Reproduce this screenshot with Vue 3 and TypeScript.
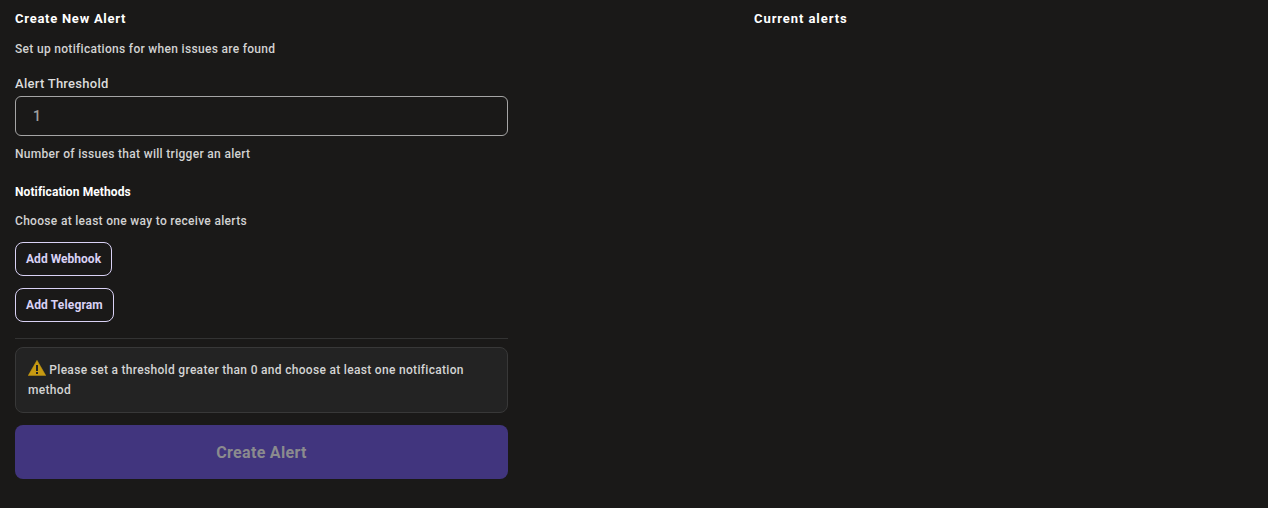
<script setup lang="ts">
const threshold = "1";
</script>

<template>
  <main class="page">
    <section class="left">
      <h2 class="title">Create New Alert</h2>
      <p class="desc first">Set up notifications for when issues are found</p>
      <label class="label">Alert Threshold</label>
      <div class="input">{{ threshold }}</div>
      <p class="desc help">Number of issues that will trigger an alert</p>
      <h3 class="subtitle">Notification Methods</h3>
      <p class="desc choose">Choose at least one way to receive alerts</p>
      <div class="methods">
        <button class="outline">Add Webhook</button>
        <button class="outline telegram">Add Telegram</button>
      </div>
      <hr class="rule" />
      <div class="notice">
        <svg class="warn" viewBox="0 0 18 16" width="18" height="16">
          <path d="M9 0.3 L17.8 15.6 L0.2 15.6 Z" fill="#c79a12" stroke="#c79a12" stroke-width="0.5" stroke-linejoin="round" />
          <rect x="8" y="5" width="2" height="6" fill="#232323" />
          <rect x="8" y="12" width="2" height="2" fill="#232323" />
        </svg>
        Please set a threshold greater than 0 and choose at least one notification method
      </div>
      <button class="create" disabled>Create Alert</button>
    </section>
    <section class="right">
      <h2 class="title current">Current alerts</h2>
    </section>
  </main>
</template>

<style>
html, body { margin: 0; background: #1a1918; }
</style>

<style scoped>
.page {
  display: flex;
  height: 508px;
  box-sizing: border-box;
  padding: 0 15px;
  background: #1a1918;
  font-family: Roboto, sans-serif;
  color: #e0e0e0;
  overflow: hidden;
}
.left { width: 493px; flex: none; }
.right { margin-left: 246px; }
.title {
  margin: 11px 0 0;
  font-size: 13px;
  line-height: 16px;
  font-weight: 700;
  letter-spacing: 0.74px;
  color: #fff;
}
.current { letter-spacing: 0.92px; }
.desc { margin: 0; font-size: 12px; line-height: 16px; letter-spacing: 0.31px; font-weight: 500; color: #d2d2d2; }
.first { margin-top: 14px; }
.label { display: block; margin-top: 19px; font-size: 13px; line-height: 16px; letter-spacing: 0.27px; font-weight: 500; color: #dcdcdc; }
.input {
  margin-top: 4px;
  height: 40px;
  box-sizing: border-box;
  border: 1px solid #a5a5a5;
  border-radius: 6px;
  padding: 0 17px;
  font-size: 14px;
  font-weight: 500;
  line-height: 38px;
  color: #a0a0a0;
}
.help { margin-top: 10px; }
.subtitle { margin: 22px 0 0; font-size: 12px; line-height: 16px; font-weight: 700; letter-spacing: 0.1px; color: #fff; }
.choose { margin-top: 13px; }
.methods { display: flex; flex-direction: column; align-items: flex-start; gap: 12px; margin-top: 13px; }
.outline {
  height: 34px;
  padding: 0 10px;
  background: transparent;
  border: 1px solid #d9d2f5;
  border-radius: 8px;
  font-family: inherit;
  font-size: 12px;
  font-weight: 700;
  letter-spacing: 0.03px;
  color: #d9d2f5;
}
.telegram { letter-spacing: 0.14px; }
.rule { margin: 16px 0 0; border: 0; border-top: 1px solid #333; }
.notice {
  margin-top: 8px;
  height: 66px;
  box-sizing: border-box;
  padding: 12px;
  background: #232323;
  border: 1px solid #383838;
  border-radius: 8px;
  font-size: 12px;
  font-weight: 500;
  line-height: 20px;
  letter-spacing: 0.31px;
  color: #d4d4d4;
}
.warn { vertical-align: -2px; }
.create {
  display: block;
  width: 100%;
  margin-top: 12px;
  height: 54px;
  border: 0;
  border-radius: 8px;
  background: #41357e;
  font-family: inherit;
  font-size: 16px;
  font-weight: 700;
  letter-spacing: 0.3px;
  color: #8b8b8e;
}
</style>
